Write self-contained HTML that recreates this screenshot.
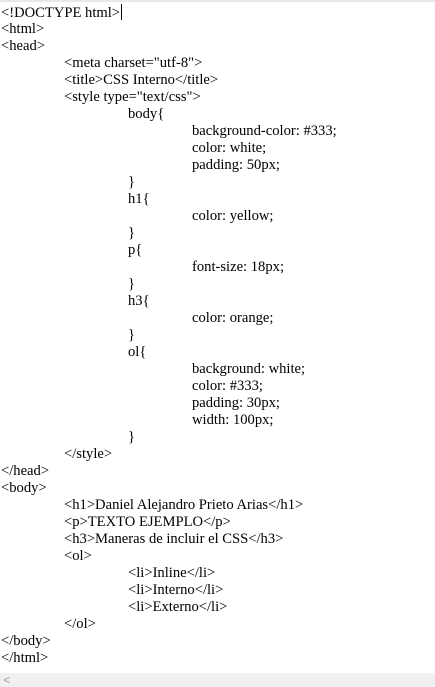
<!DOCTYPE html>
<html><head><meta charset="utf-8"><style>
html,body{margin:0;padding:0;background:#fff;width:435px;height:687px;overflow:hidden}
.c{position:absolute;left:1px;top:4px;font-family:"Liberation Serif",serif;font-size:14.6px;line-height:17px;color:#000}
.c div{height:17px;white-space:pre}
.l1{padding-left:63px}.l2{padding-left:127px}.l3{padding-left:191px}
.cur{display:inline-block;width:1px;height:16px;background:#000;vertical-align:-3px;margin-left:1px}
.top{position:absolute;left:0;top:0;width:435px;height:2px;background:#e8e8e8}
.sb{position:absolute;left:0;top:673px;width:435px;height:14px;background:#f0f0f0;color:#a0a0a0;font:12px "Liberation Sans",sans-serif;line-height:14px}
</style></head><body>
<div class="top"></div>
<div class="c"><div>&lt;!DOCTYPE html&gt;<span class="cur"></span></div><div>&lt;html&gt;</div><div>&lt;head&gt;</div><div class="l1">&lt;meta charset="utf-8"&gt;</div><div class="l1">&lt;title&gt;CSS Interno&lt;/title&gt;</div><div class="l1">&lt;style type="text/css"&gt;</div><div class="l2">body{</div><div class="l3">background-color: #333;</div><div class="l3">color: white;</div><div class="l3">padding: 50px;</div><div class="l2">}</div><div class="l2">h1{</div><div class="l3">color: yellow;</div><div class="l2">}</div><div class="l2">p{</div><div class="l3">font-size: 18px;</div><div class="l2">}</div><div class="l2">h3{</div><div class="l3">color: orange;</div><div class="l2">}</div><div class="l2">ol{</div><div class="l3">background: white;</div><div class="l3">color: #333;</div><div class="l3">padding: 30px;</div><div class="l3">width: 100px;</div><div class="l2">}</div><div class="l1">&lt;/style&gt;</div><div>&lt;/head&gt;</div><div>&lt;body&gt;</div><div class="l1">&lt;h1&gt;Daniel Alejandro Prieto Arias&lt;/h1&gt;</div><div class="l1">&lt;p&gt;TEXTO EJEMPLO&lt;/p&gt;</div><div class="l1">&lt;h3&gt;Maneras de incluir el CSS&lt;/h3&gt;</div><div class="l1">&lt;ol&gt;</div><div class="l2">&lt;li&gt;Inline&lt;/li&gt;</div><div class="l2">&lt;li&gt;Interno&lt;/li&gt;</div><div class="l2">&lt;li&gt;Externo&lt;/li&gt;</div><div class="l1">&lt;/ol&gt;</div><div>&lt;/body&gt;</div><div>&lt;/html&gt;</div></div>
<div class="sb">&nbsp;&lt;</div>
</body></html>
